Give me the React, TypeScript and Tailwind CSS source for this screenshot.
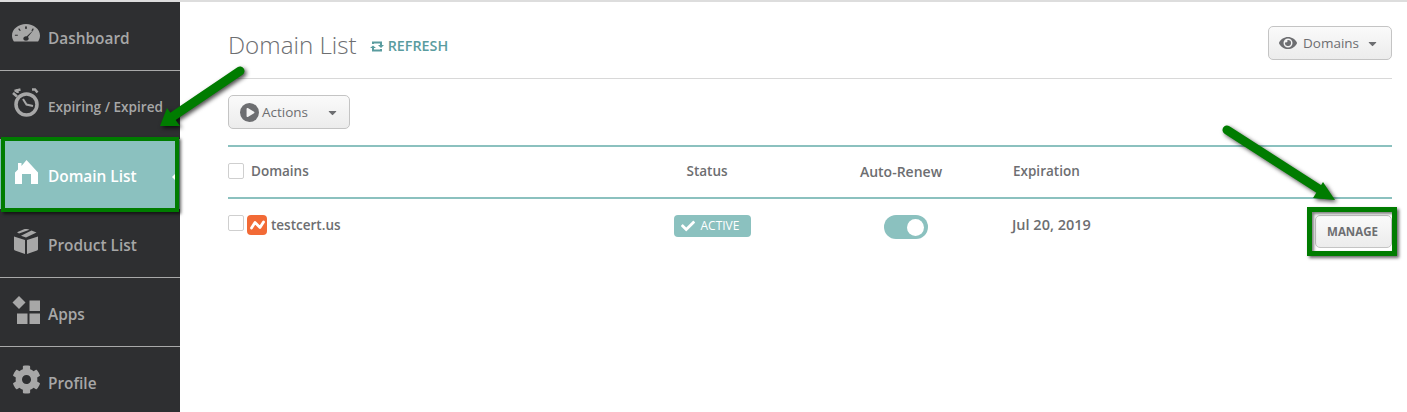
import React from 'react';
import { FaCog, FaEye, FaPlay, FaCheck, FaCaretDown } from 'react-icons/fa';

const GaugeIcon = () => (
  <svg width="28" height="18" viewBox="0 0 29 22" preserveAspectRatio="none" fill="currentColor">
    <path fillRule="evenodd" d="M14.5 0C6.5 0 0 6.3 0 14.2c0 2.8.8 5.2 2 7.3h25c1.2-2.1 2-4.5 2-7.3C29 6.3 22.5 0 14.5 0zM14.5 3l1 .1-.3 3h-1.4l-.3-3zM7.4 5.3l1.7 2.6-1 .7-1.700-2.500zM21.600 5.300l1 .8-1.600 2.500-1-.7zM3 13h3v1.400H3zM22.800 6.800l-6.300 9c.5.5.8 1.100.8 1.900 0 1.600-1.300 2.800-2.800 2.800s-2.800-1.200-2.800-2.800 1.300-2.800 2.800-2.800c.3 0 .6 0 .8.100z" />
  </svg>
);

const StopwatchIcon = () => (
  <svg width="28" height="29" viewBox="0 0 28 29" fill="none" stroke="currentColor">
    <circle cx="14.500" cy="16.500" r="10.500" strokeWidth="3.500" />
    <path d="M11 11l3.500 5.500 6.500 1.500" strokeWidth="2" />
    <path d="M1 5l4 3.500M5.500 1v4M2.500 3l6-1.500" strokeWidth="2.500" />
    <path d="M20 1.500h3l2.500 3" strokeWidth="2.500" />
  </svg>
);

const HouseIcon = () => (
  <svg width="23" height="24" viewBox="0 0 23 24" fill="currentColor">
    <path d="M0 12.500L3 9.500V3h3.500v3L11.500 0 23 12.500V24h-7V14H7v10H0z" />
  </svg>
);

const BoxIcon = () => (
  <svg width="24" height="25" viewBox="0 0 24 25" fill="currentColor">
    <path d="M0 7.500l11 3.500v14L1 21.500C.4 21.300 0 20.800 0 20.200zM24 7.500L13 11v14l10-3.500c.6-.2 1-.7 1-1.300z" />
    <path d="M10 .3c1-.4 2.800-.4 4 0l1.500.5L5 4.500 3 3.200zM17.500 1.500l5 2L12 8.500 7 6.800 17.500 1.500z" />
  </svg>
);

const AppsIcon = () => (
  <svg width="29" height="29" viewBox="0 0 29 29" fill="currentColor">
    <path d="M7 0l6.500 6.500L7 13 .5 6.500z" />
    <path d="M17.500 4.500H28v10.500H17.500zM5 17.500h10.500V28H5zM17.500 17.500H28V28H17.500z" />
  </svg>
);

const RefreshIcon = () => (
  <svg width="14" height="13" viewBox="0 0 14 13" fill="none" stroke="currentColor" strokeWidth="2">
    <path d="M3 4V2.500h8V5" />
    <path d="M11 9v1.500H3V8" />
    <path d="M8 5h6l-3 3zM0 8h6L3 5.500z" fill="currentColor" stroke="none" />
  </svg>
);

const LogoMark = () => (
  <span className="flex h-5 w-5 items-center justify-center rounded-[4px] bg-[#f26a36]">
    <svg width="15" height="10" viewBox="0 0 15 10" fill="none" stroke="white" strokeWidth="2.800" strokeLinecap="round" strokeLinejoin="round">
      <path d="M1.500 8L5 2.500 10 7.500 13.500 2" />
    </svg>
  </span>
);

const navItems = [
  { label: 'Dashboard', icon: <GaugeIcon />, iconBox: 'mb-[6px]', text: 'mt-[6px] text-[15.4px]' },
  { label: 'Expiring / Expired', icon: <StopwatchIcon />, iconBox: 'mb-[5px]', text: 'mt-[4px] text-[13.6px]' },
  { label: 'Domain List', icon: <HouseIcon />, iconBox: 'mb-[4px] pl-[3px]', text: 'mt-[6px] text-[15.4px]', active: true },
  { label: 'Product List', icon: <BoxIcon />, iconBox: 'mb-[3px] pl-[2px]', text: 'mt-[6px] text-[15.4px]' },
  { label: 'Apps', icon: <AppsIcon />, iconBox: 'mb-[4px]', text: 'mt-[6px] text-[15.4px]' },
  { label: 'Profile', icon: <FaCog size={29} />, iconBox: 'mb-[4px]', text: 'mt-[6px] text-[15.4px]' },
];

const Sidebar = () => (
  <aside className="w-[180px] shrink-0 bg-[#2e2f31]">
    {navItems.map((item) => (
      <div
        key={item.label}
        className={`relative flex h-[69px] items-center border-b border-[#a9a9a9] pl-3 ${
          item.active ? 'border-transparent bg-[#8bc1bf] text-white' : 'text-[#a7a7a7]'
        }`}
      >
        <span className={`flex w-[36px] shrink-0 items-center ${item.iconBox}`}>{item.icon}</span>
        <span className={`font-semibold whitespace-nowrap ${item.text}`}>{item.label}</span>
        {item.active && (
          <span className="absolute right-[3px] top-[32px] h-0 w-0 border-y-[5px] border-r-[5px] border-y-transparent border-r-white" />
        )}
      </div>
    ))}
  </aside>
);

const GrayButton = ({ children, className }: { children: React.ReactNode; className: string }) => (
  <button className={`flex items-center rounded-[5px] border border-[#c4c4c4] bg-gradient-to-b from-[#fafafa] to-[#ececec] text-[#6d6e71] ${className}`}>
    {children}
  </button>
);

const Checkbox = () => (
  <span className="block h-4 w-4 rounded-[2px] border border-[#cfcfcf] bg-white" />
);

export default function App() {
  return (
    <div className="relative h-[412px] w-[1407px] overflow-hidden bg-white font-['Open_Sans',sans-serif]">
      <div className="h-[2px] bg-[#dddddd]" />
      <div className="flex h-[410px]">
        <Sidebar />
        <main className="flex-1 pl-12 pr-[15px]">
          <header className="flex h-[77px] items-start border-b border-[#d8d8d8] pt-[24px]">
            <h1 className="mt-[1px] text-[24.200px] leading-[36px] font-light text-[#6d6e71]">Domain List</h1>
            <a className="mt-[2px] ml-[13px] flex items-center gap-[4px] text-[14.300px] leading-[36px] font-semibold text-[#5a9c9f]">
              <RefreshIcon />
              REFRESH
            </a>
            <GrayButton className="ml-auto h-[34px] w-[124px] pl-[10px] text-[13.5px]">
              <FaEye size={18} />
              <span className="ml-[6px]">Domains</span>
              <FaCaretDown size={13} className="ml-[7px]" />
            </GrayButton>
          </header>

          <div className="pt-4">
            <GrayButton className="h-[34px] w-[122px] pl-[11px] text-[13.5px]">
              <span className="flex h-[19px] w-[19px] items-center justify-center rounded-full bg-[#6d6e71]">
                <FaPlay size={9} className="ml-[1px] text-[#f3f3f3]" />
              </span>
              <span className="ml-[3px]">Actions</span>
              <FaCaretDown size={13} className="ml-[18px]" />
            </GrayButton>
          </div>

          <div className="mt-4 grid h-[54px] grid-cols-[412px_134px_239px_1fr] items-center border-y-2 border-[#8bc1bf] pb-[2px] text-[13.5px] font-semibold text-[#6d6e71]">
            <div className="flex items-center gap-[7px]">
              <Checkbox />
              Domains
            </div>
            <div className="text-center">Status</div>
            <div className="pl-[15px] text-center text-[14px]">Auto-Renew</div>
            <div>Expiration</div>
          </div>

          <div className="grid grid-cols-[412px_134px_239px_1fr] pt-[16px] text-[14.500px] font-semibold text-[#6d6e71]">
            <div className="flex items-start gap-[3px]">
              <Checkbox />
              <LogoMark />
              <span className="ml-[1px] text-[13.500px] leading-[20px]">testcert.us</span>
            </div>
            <div className="flex justify-center pl-[10px]">
              <span className="flex h-[22px] w-[77px] items-center rounded-[4px] bg-[#8bc1bf] pl-[7px] text-[12px] font-normal text-white">
                <FaCheck size={14} />
                <span className="ml-[6px]">ACTIVE</span>
              </span>
            </div>
            <div className="flex justify-center pl-[25px]">
              <span className="flex h-6 w-[44px] items-center justify-end rounded-full bg-[#8bc1bf] pr-[4px]">
                <span className="h-[17px] w-[17px] rounded-full bg-white" />
              </span>
            </div>
            <div className="flex items-start justify-between leading-[20px]">
              <span className="-ml-px">Jul 20, 2019</span>
              <GrayButton className="h-[33px] w-[77px] justify-center pr-[2px] text-[11.5px] font-bold">MANAGE</GrayButton>
            </div>
          </div>
        </main>
      </div>

      {/* annotations drawn over the screenshot */}
      <div className="absolute left-[1px] top-[137px] h-[75px] w-[178px] border-4 border-[#007c00] shadow-[2px_2px_3px_rgba(0,0,0,0.6)]" />
      <div className="absolute left-[1307px] top-[207px] h-[49px] w-[90px] border-[5px] border-[#007c00] shadow-[2px_2px_3px_rgba(0,0,0,0.6),inset_2px_2px_3px_rgba(0,0,0,0.5)]" />
      <svg className="absolute left-0 top-0 drop-shadow-[2px_2px_2px_rgba(0,0,0,0.7)]" width="1407" height="412" fill="#007c00">
        <path d="M240 71L172 117" stroke="#007c00" strokeWidth="9" strokeLinecap="round" />
        <path d="M160 126L167 108 180 126z" />
        <path d="M1227 130L1322 191" stroke="#007c00" strokeWidth="9" strokeLinecap="round" />
        <path d="M1335 200L1323 182 1313 198z" />
      </svg>
    </div>
  );
}
